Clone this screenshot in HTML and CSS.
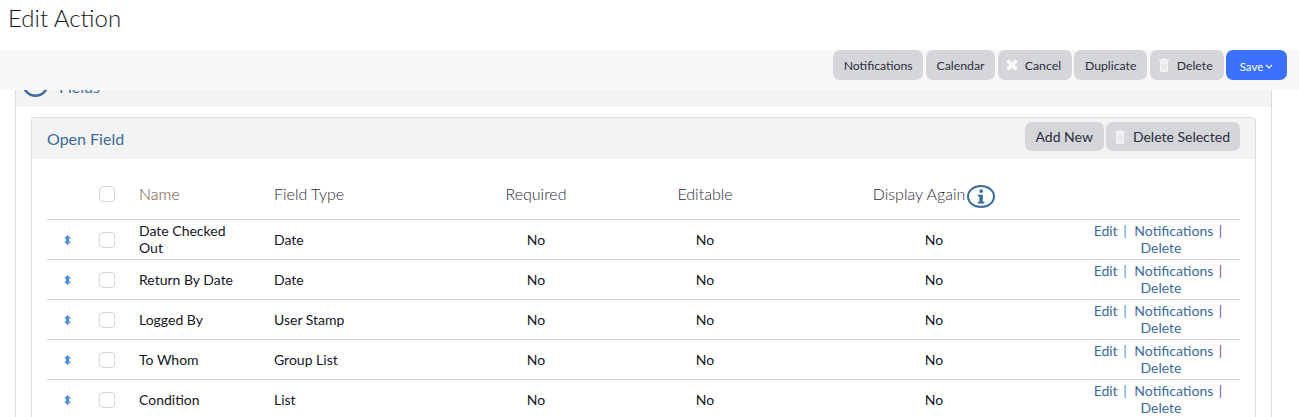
FILE: index.html
```html
<!DOCTYPE html>
<html lang="en">
<head>
<meta charset="utf-8">
<title>Edit Action</title>
<link rel="stylesheet" href="styles.css">
</head>
<body>
<svg class="sprites" width="0" height="0" aria-hidden="true">
  <symbol id="trash" viewBox="0 0 11 15">
    <path fill="currentColor" d="M3.800 0h3.400l.6 1.300H11v1.500H0V1.300h3.200zM1 3.500h9v10.200c0 .7-.6 1.300-1.300 1.300H2.300C1.600 15 1 14.400 1 13.700zM2.800 5.500v7.500h.9V5.500zm2.300 0v7.500h.9V5.500zm2.200 0v7.500h.9V5.500z"/>
  </symbol>
  <symbol id="updown" viewBox="0 0 7 10">
    <path fill="currentColor" d="M3.500 0L7 3.600H5V6.400H7L3.500 10 0 6.400H2V3.600H0z"/>
  </symbol>
</svg>
<h1 class="title">Edit Action</h1>
<div class="toolbar">
  <button class="btn">Notifications</button>
  <button class="btn btn-cal">Calendar</button>
  <button class="btn btn-cancel">
    <svg class="ico-x" viewBox="0 0 12 12"><path d="M1.500 1.500l9 9M10.500 1.500l-9 9"/></svg>Cancel
  </button>
  <button class="btn btn-dup">Duplicate</button>
  <button class="btn btn-del"><svg class="ico-trash"><use href="#trash"/></svg>Delete</button>
  <button class="btn btn-save">Save<svg class="ico-chev" viewBox="0 0 8 5"><path d="M1 1l3 3 3-3"/></svg></button>
</div>
<main class="panel">
  <div class="panel-head">
    <svg class="ico-circle" viewBox="0 0 27 27"><circle cx="13.500" cy="13.500" r="12.200"/></svg>
    <span class="panel-title">Fields</span>
  </div>
  <div class="panel-body">
    <section class="card">
      <div class="card-head">
        <span class="card-title">Open Field</span>
        <div class="card-actions">
          <button class="btn btn-lg">Add New</button>
          <button class="btn btn-lg btn-del"><svg class="ico-trash"><use href="#trash"/></svg>Delete Selected</button>
        </div>
      </div>
      <div class="card-body">
        <table class="fields">
          <colgroup>
            <col class="c-handle"><col class="c-check"><col class="c-name"><col class="c-type">
            <col class="c-req"><col class="c-edit"><col class="c-disp"><col class="c-act">
          </colgroup>
          <thead>
            <tr>
              <th></th>
              <th><span class="check"></span></th>
              <th class="left name-head">Name</th>
              <th class="left">Field Type</th>
              <th>Required</th>
              <th>Editable</th>
              <th class="disp-head">Display Again<svg class="ico-info" viewBox="0 0 28 23"><ellipse cx="14" cy="11.500" rx="13" ry="10.500"/><path class="i" d="M14.200 4.200a1.900 1.900 0 1 1 0 3.800 1.900 1.900 0 0 1 0-3.800zM10.800 9.800h5v7h1.600v1.800h-6.600v-1.800h1.600v-5.200h-1.600z"/></svg></th>
              <th></th>
            </tr>
          </thead>
          <tbody>
            <tr>
              <td class="ctl"><svg class="ico-updown"><use href="#updown"/></svg></td>
              <td class="ctl"><span class="check"></span></td>
              <td class="two">Date Checked Out</td><td>Date</td><td class="mid">No</td><td class="mid">No</td><td class="mid">No</td>
              <td class="acts"><a>Edit</a> <i>|</i> <a>Notifications</a> <i class="last">|</i> <a>Delete</a></td>
            </tr>
            <tr>
              <td class="ctl"><svg class="ico-updown"><use href="#updown"/></svg></td>
              <td class="ctl"><span class="check"></span></td>
              <td>Return By Date</td><td>Date</td><td class="mid">No</td><td class="mid">No</td><td class="mid">No</td>
              <td class="acts"><a>Edit</a> <i>|</i> <a>Notifications</a> <i class="last">|</i> <a>Delete</a></td>
            </tr>
            <tr>
              <td class="ctl"><svg class="ico-updown"><use href="#updown"/></svg></td>
              <td class="ctl"><span class="check"></span></td>
              <td>Logged By</td><td>User Stamp</td><td class="mid">No</td><td class="mid">No</td><td class="mid">No</td>
              <td class="acts"><a>Edit</a> <i>|</i> <a>Notifications</a> <i class="last">|</i> <a>Delete</a></td>
            </tr>
            <tr>
              <td class="ctl"><svg class="ico-updown"><use href="#updown"/></svg></td>
              <td class="ctl"><span class="check"></span></td>
              <td>To Whom</td><td>Group List</td><td class="mid">No</td><td class="mid">No</td><td class="mid">No</td>
              <td class="acts"><a>Edit</a> <i>|</i> <a>Notifications</a> <i class="last">|</i> <a>Delete</a></td>
            </tr>
            <tr>
              <td class="ctl"><svg class="ico-updown"><use href="#updown"/></svg></td>
              <td class="ctl"><span class="check"></span></td>
              <td>Condition</td><td>List</td><td class="mid">No</td><td class="mid">No</td><td class="mid">No</td>
              <td class="acts"><a>Edit</a> <i>|</i> <a>Notifications</a> <i class="last">|</i> <a>Delete</a></td>
            </tr>
          </tbody>
        </table>
      </div>
    </section>
  </div>
</main>
</body>
</html>
```
FILE: styles.css
```css
* { box-sizing: border-box; }
html, body { margin: 0; padding: 0; height: 417px; overflow: hidden; background: #fff; }
body { position: relative; font-family: Lato, sans-serif; font-size: 14px; color: #1f2230; }
.sprites { position: absolute; }

.title { margin: 0; height: 70px; padding: 3px 0 0 8px; font-size: 24px; line-height: 30px; font-weight: 300; color: #14161c; }

.toolbar { position: absolute; top: 50px; left: 0; right: 0; height: 40px; padding-right: 12px; background: #f8f8f8; display: flex; justify-content: flex-end; align-items: flex-start; gap: 2.400px; z-index: 2; }

.btn { height: 30px; padding: 0 10.500px; border: 0; border-radius: 7px; background: #d5d6da; color: #2b2e3b; font-family: Lato, sans-serif; font-size: 12.250px; display: inline-flex; align-items: center; justify-content: center; white-space: nowrap; }
.btn svg { flex: none; }
.btn-cal { padding: 0 11px; }
.btn-dup { padding: 0 11px; }
.btn-cancel { padding: 0 10.500px 0 8px; }
.ico-x { width: 12px; height: 12px; margin-right: 7px; }
.ico-x path { stroke: #fbfbfb; stroke-width: 3.400; fill: none; }
.btn-del { padding: 0 11px 0 9px; }
.ico-trash { width: 10px; height: 14px; margin-right: 8px; color: #f6f6f8; }
.btn-save { background: #3a72ff; color: #fff; font-size: 11.500px; padding: 2px 0 0; width: 61px; }
.ico-chev { width: 8px; height: 5px; margin-left: 2px; }
.ico-chev path { fill: none; stroke: #fff; stroke-width: 1.200; }

.panel { margin: 0 27px 0 15px; border: 1px solid #dcdcdc; border-bottom: 0; border-top: 0; }
.panel-head { height: 37px; background: #f3f3f3; padding: 0 0 0 6px; display: flex; align-items: flex-start; }
.ico-circle { width: 27px; height: 27px; flex: none; }
.ico-circle circle { fill: none; stroke: #3c6a9c; stroke-width: 2.500; }
.panel-title { margin-left: 10px; margin-top: 7px; font-size: 16px; line-height: 20px; color: #3c6a9c; }
.panel-body { padding: 10px 15px 0; }

.card { border: 1px solid #dcdcdc; border-bottom: 0; border-radius: 4px 4px 0 0; }
.card-head { height: 41px; background: #f3f3f3; padding: 4px 15px 0 15px; display: flex; justify-content: space-between; align-items: flex-start; }
.card-title { font-size: 16px; line-height: 34px; color: #3c6a9c; }
.card-actions { display: flex; gap: 2px; }
.btn-lg { height: 29px; font-size: 14px; padding: 0 11px; }
.btn-lg.btn-del { padding: 0 10px 0 9px; }

.card-body { padding: 0 15px; }
.fields { width: 1193px; table-layout: fixed; border-collapse: collapse; font-size: 14px; }
.c-handle { width: 40px; }
.c-check { width: 40px; }
.c-name { width: 135px; }
.c-type { width: 190px; }
.c-req { width: 168px; }
.c-edit { width: 170px; }
.c-disp { width: 288px; }
.c-act { width: 162px; }

.fields th { height: 60px; padding: 10px 0 0; font-weight: 300; font-size: 16px; text-align: center; color: #2b2e3b; border-bottom: 1px solid #d8d8d8; vertical-align: middle; }
.fields th.left { text-align: left; padding-left: 12px; }
.fields th.name-head { color: #6e4a38; }
.fields th.disp-head { padding-top: 14px; }
.ico-info { width: 28px; height: 23px; vertical-align: middle; margin-left: 2px; }
.ico-info ellipse { fill: none; stroke: #3c6a9c; stroke-width: 2; }
.ico-info .i { fill: #3c6a9c; }

.fields td { height: 40px; padding: 1px 12px 0; line-height: 17px; color: #14161f; border-bottom: 1px solid #d8d8d8; vertical-align: middle; }
.fields td.two { padding-top: 0; }
.fields td.mid { text-align: center; padding: 1px 0 0; }
.fields td.ctl { padding: 1px 0 0; }
.check { display: block; width: 16px; height: 16px; margin: 0 auto; border: 1px solid #d3d6e0; border-radius: 4px; background: #fff; }
.ico-updown { display: block; width: 7px; height: 10px; margin: 0 auto; color: #4a90d0; }

.fields td.acts { padding: 2px 4px 0 8px; text-align: center; color: #3c6a9c; line-height: 17px; vertical-align: top; }
.acts a { color: #3c6a9c; }
.acts i { font-style: normal; margin: 0 4px 0 2px; color: #4a90d0; }
.acts i.last { margin: 0 6px 0 2px; color: #7a4f9c; }
```
